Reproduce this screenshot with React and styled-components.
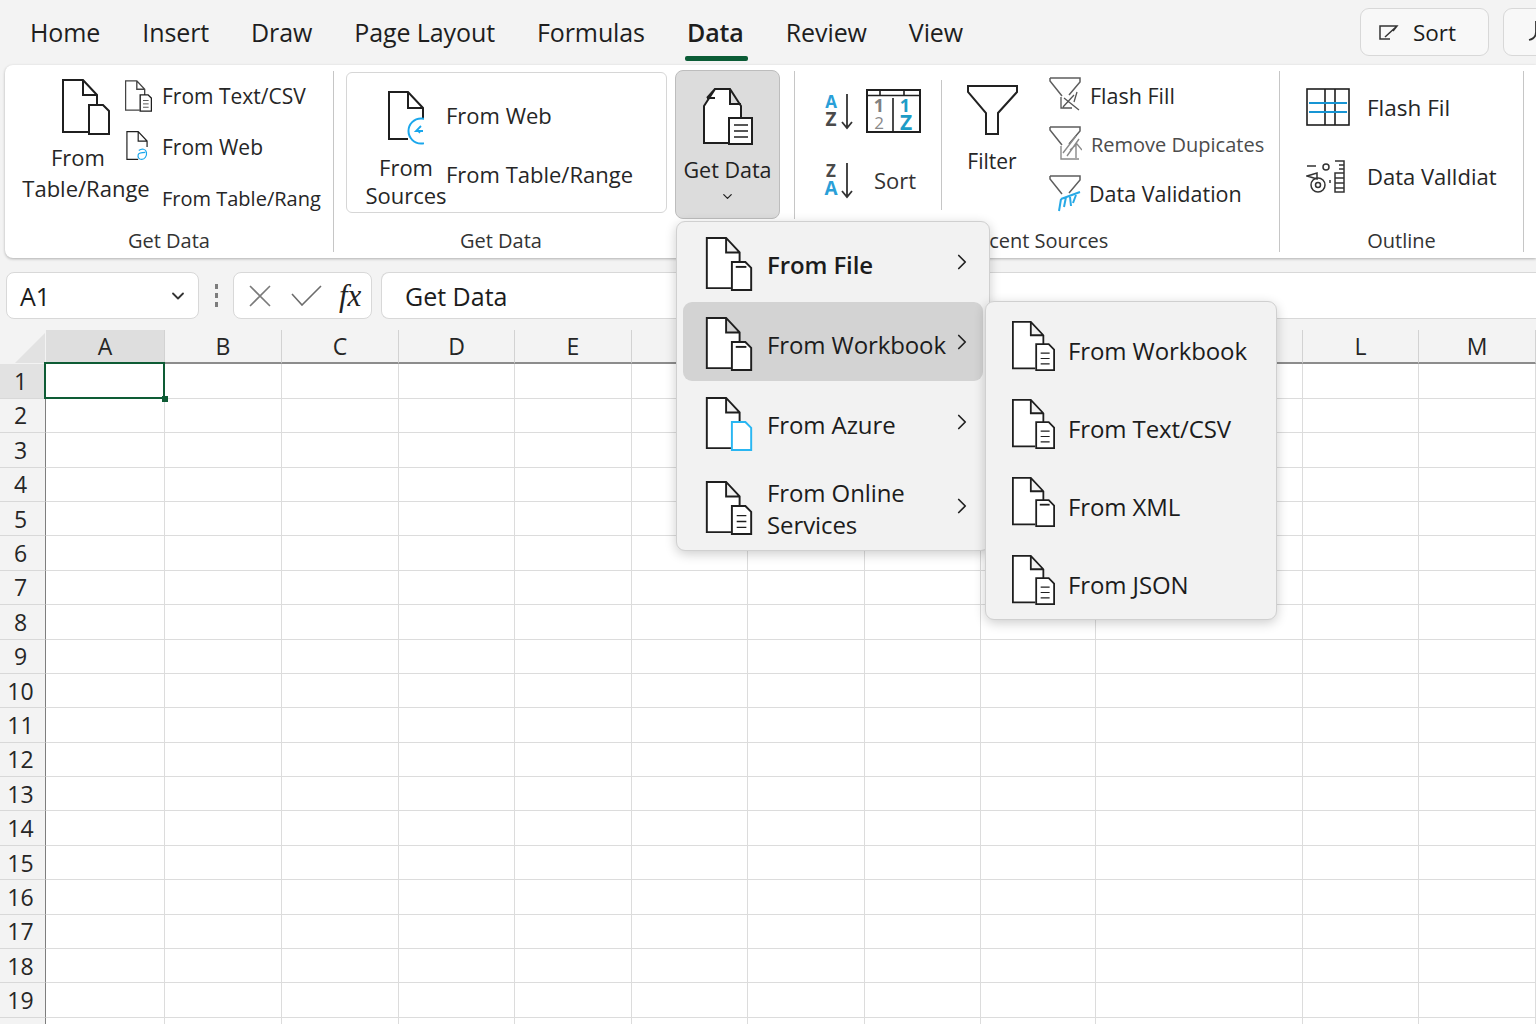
import React from 'react';
import styled, { createGlobalStyle } from 'styled-components';
import { ChevronDown, ChevronRight } from 'lucide-react';

const GlobalStyle = createGlobalStyle`
  html, body {
    margin: 0;
    padding: 0;
    background: #f3f3f3;
  }
  body {
    font-family: "Open Sans", "Noto Sans", "Liberation Sans", sans-serif;
    color: #1c1c1c;
  }
`;

const Page = styled.div`
  position: relative;
  width: 1536px;
  height: 1024px;
  overflow: hidden;
  background: #f3f3f3;
`;

/* tab strip */
const TabBar = styled.div`
  display: flex;
  height: 65px;
  padding-left: 30px;
  gap: 42px;
`;

const Tab = styled.div`
  position: relative;
  display: flex;
  align-items: center;
  font-size: 25px;
  letter-spacing: -0.1px;
  font-weight: ${p => (p.$active ? 600 : 400)};
  color: #1e1e1e;
  padding-bottom: 2px;
  &::after {
    content: '';
    display: ${p => (p.$active ? 'block' : 'none')};
    position: absolute;
    left: -2px;
    right: -4px;
    bottom: 4px;
    height: 5px;
    border-radius: 2px;
    background: #0b5c36;
  }
`;

const Actions = styled.div`
  display: flex;
  flex: none;
  width: 176px;
  margin-left: auto;
  margin-top: 8px;
  height: 48px;
  gap: 14px;
  overflow: hidden;
`;

const ActionButton = styled.button`
  flex: none;
  display: flex;
  align-items: center;
  gap: 14px;
  width: ${p => p.$w}px;
  height: 48px;
  padding: 0 0 0 ${p => p.$pad}px;
  box-sizing: border-box;
  border: 1px solid #d8d8d8;
  border-radius: 9px;
  background: #f8f8f8;
  font: 400 22.5px "Open Sans", sans-serif;
  color: #1c1c1c;
`;

/* ribbon */
const Ribbon = styled.div`
  display: flex;
  height: 193px;
  margin-left: 5px;
  background: #fff;
  border-radius: 8px 0 0 8px;
  box-shadow: 0 1px 3px rgba(0, 0, 0, 0.28);
`;

const Group = styled.section`
  flex: none;
  display: flex;
  flex-direction: column;
  width: ${p => p.$w}px;
  height: 100%;
`;

const GroupBody = styled.div`
  flex: 1;
  display: flex;
  min-height: 0;
`;

const GroupLabel = styled.div`
  height: 34px;
  line-height: 34px;
  text-align: center;
  font-size: 20px;
  color: #333;
`;

const Separator = styled.div`
  flex: none;
  width: 1px;
  margin-top: ${p => p.$top || 6}px;
  height: ${p => p.$h || 181}px;
  background: #c6c6c6;
`;

const LargeButton = styled.div`
  flex: none;
  display: flex;
  flex-direction: column;
  align-items: center;
  width: ${p => p.$w}px;
  margin-left: ${p => p.$left}px;
  padding-top: ${p => p.$top}px;
`;

const LargeText = styled.div`
  margin-top: ${p => p.$gap}px;
  font-size: ${p => p.$size}px;
  line-height: ${p => p.$lh}px;
  text-align: center;
  white-space: nowrap;
  color: #262626;
`;

const ShiftedLine = styled.span`
  display: block;
  margin-right: ${p => p.$shift}px;
`;

const SmallList = styled.div`
  display: flex;
  flex-direction: column;
  margin-left: ${p => p.$left}px;
  padding-top: ${p => p.$top}px;
`;

const SmallRow = styled.div`
  display: flex;
  align-items: center;
  height: ${p => p.$h}px;
  white-space: nowrap;
  font-size: ${p => p.$size || 21}px;
  color: ${p => p.$color || '#262626'};
  font-weight: ${p => p.$weight || 400};
`;

const IconSlot = styled.div`
  flex: none;
  display: flex;
  align-items: center;
  width: ${p => p.$w}px;
`;

const BorderedBox = styled.div`
  flex: none;
  display: flex;
  box-sizing: border-box;
  width: 321px;
  height: 141px;
  margin: 7px 0 0 12px;
  border: 1px solid #d6d6d6;
  border-radius: 6px;
`;

const GetDataWrap = styled.div`
  flex: none;
  width: 126px;
  padding: 5px 0 0 7px;
  box-sizing: border-box;
`;

const GetDataButton = styled.div`
  display: flex;
  flex-direction: column;
  align-items: center;
  box-sizing: border-box;
  width: 105px;
  height: 149px;
  padding-top: 17px;
  background: #dcdcdc;
  border: 1px solid #bdbdbd;
  border-radius: 8px;
`;

const GetDataText = styled.div`
  margin-top: 9px;
  margin-bottom: 3px;
  font-size: 21.5px;
  line-height: 32px;
  color: #222;
`;

const SortColumn = styled.div`
  flex: none;
  width: 146px;
  box-sizing: border-box;
  padding: 24px 0 0 29px;
  display: flex;
  flex-direction: column;
  gap: 25px;
`;

const SortRow = styled.div`
  display: flex;
  align-items: center;
  height: 44px;
  gap: ${p => p.$gap}px;
  font-size: 22px;
  color: #333;
`;

/* formula bar */
const FormulaRow = styled.div`
  display: flex;
  align-items: stretch;
  height: 47px;
  margin-top: 14px;
  padding-left: 6px;
`;

const FieldBox = styled.div`
  flex: ${p => (p.$grow ? 1 : 'none')};
  display: flex;
  align-items: center;
  box-sizing: border-box;
  width: ${p => (p.$w ? p.$w + 'px' : 'auto')};
  padding: 0 ${p => p.$right || 0}px 0 ${p => p.$left || 0}px;
  background: #fff;
  border: 1px solid #d8d8d8;
  border-right-width: ${p => (p.$grow ? 0 : 1)}px;
  border-radius: ${p => (p.$grow ? '8px 0 0 8px' : '8px')};
  font-size: 25px;
  color: #1c1c1c;
`;

const NameText = styled.span`
  flex: 1;
  font-weight: 500;
`;

const GripDots = styled.div`
  flex: none;
  display: flex;
  flex-direction: column;
  justify-content: center;
  align-items: center;
  gap: 4px;
  width: 34px;
  & > i {
    display: block;
    width: 3px;
    height: 5px;
    background: #7c7c7c;
  }
`;

const FxText = styled.span`
  font-family: "Liberation Serif", serif;
  font-style: italic;
  font-size: 31px;
  margin-left: 17px;
  color: #222;
`;

/* sheet */
const Sheet = styled.div`
  margin-top: 11px;
  display: grid;
  grid-template-columns: ${p => p.$template};
  grid-auto-rows: 34.4px;
`;

const HeaderCorner = styled.div`
  height: 34px;
  position: relative;
  &::after {
    content: '';
    position: absolute;
    right: 1px;
    bottom: 1px;
    border-style: solid;
    border-width: 0 0 30px 30px;
    border-color: transparent transparent #e2e2e2 transparent;
  }
`;

const ColHeader = styled.div`
  height: 34px;
  display: flex;
  align-items: center;
  justify-content: center;
  box-sizing: border-box;
  font-size: 23px;
  color: #262626;
  background: ${p => (p.$selected ? '#dedede' : 'transparent')};
  border-right: 1px solid #d2d2d2;
  border-bottom: 2px solid #8c8c8c;
`;

const RowHeader = styled.div`
  display: flex;
  align-items: center;
  justify-content: center;
  box-sizing: border-box;
  padding-right: 4px;
  font-size: 23px;
  color: #262626;
  background: ${p => (p.$selected ? '#e2e2e2' : '#f3f3f3')};
  border-right: 1.5px solid #7e7e7e;
  border-bottom: 1px solid #d8d8d8;
`;

const Cell = styled.div`
  position: relative;
  box-sizing: border-box;
  background: #fff;
  border-right: 1px solid #dcdcdc;
  border-bottom: 1px solid #dcdcdc;
  ${p =>
    p.$selected &&
    `
    &::before {
      content: '';
      position: absolute;
      inset: -2px -1px -1px -2px;
      border: 2.5px solid #0e5c35;
      z-index: 1;
    }
    &::after {
      content: '';
      position: absolute;
      right: -4px;
      bottom: -4px;
      width: 6px;
      height: 6px;
      background: #0e5c35;
      z-index: 2;
    }
  `}
`;

/* flyout menus */
const Menu = styled.div`
  position: absolute;
  left: ${p => p.$x}px;
  top: ${p => p.$y}px;
  width: ${p => p.$w}px;
  height: ${p => p.$h}px;
  box-sizing: border-box;
  padding: ${p => p.$pad};
  background: #f2f2f2;
  border: 1px solid #d0d0d0;
  border-radius: 9px;
  box-shadow: 0 3px 12px rgba(0, 0, 0, 0.2);
  z-index: ${p => p.$z};
`;

const MenuItem = styled.div`
  display: flex;
  align-items: center;
  height: ${p => p.$h}px;
  box-sizing: border-box;
  padding: 0 16px 0 ${p => p.$left}px;
  border-radius: 9px;
  background: ${p => (p.$active ? '#d3d3d3' : 'transparent')};
`;

const MenuIcon = styled.div`
  flex: none;
  display: flex;
  margin-top: ${p => p.$top || 0}px;
  margin-right: ${p => p.$gap}px;
`;

const MenuText = styled.div`
  flex: 1;
  padding-top: ${p => p.$top}px;
  font-size: 24px;
  line-height: 32px;
  letter-spacing: -0.1px;
  font-weight: ${p => (p.$strong ? 600 : 400)};
  color: #1c1c1c;
  white-space: nowrap;
`;

const ink = '#1f1f1f';

const subLines = {
  lines: <path d="M32 36h10M32 42h10M32 48h10" strokeWidth="1.3" />,
  tab: <path d="M31 31h11" strokeWidth="2" />,
  plain: null,
};

// page with a folded corner and a smaller page on top of it
const DocIcon = ({ w = 48, h = 56, sub = 'plain', subColor = ink, color = ink, weight = 2 }) => (
  <svg width={w} height={h} viewBox="0 0 48 56" fill="none" stroke={color} strokeWidth={weight}>
    <path d="M26 53H1V1H21L35 16V26M21 1V16H35" fill="#fff" />
    <path d="M27 55V26H41L47 32V55Z" fill="#fff" stroke={subColor} />
    <g stroke={subColor}>{subLines[sub]}</g>
  </svg>
);

const CircleDocIcon = ({ w, h, scribble }) => (
  <svg width={w} height={h} viewBox="0 0 36 54" fill="none" stroke={ink} strokeWidth="2">
    <path d="M20 48H1V1H20L35 17V27M20 1V17H35" />
    {scribble ? (
      <path d="M21 33c5-4 12-3 13 3 1 6-3 12-8 12-5 0-7-4-6-8 1-3 6-4 12-4" stroke="#1aa7ec" />
    ) : (
      <g stroke="#1aa7ec">
        <circle cx="33" cy="40" r="12.5" fill="#fff" />
        <path d="M33 35l-5 5h4l-1 2M28 40h7" strokeWidth="1.8" />
      </g>
    )}
  </svg>
);

const GetDataIcon = () => (
  <svg width="50" height="57" viewBox="0 0 50 57" fill="none" stroke={ink} strokeWidth="2">
    <path d="M26 55H1V18L12 1H27L38 18V30M4 10H12M27 1V16H38M12 1L4 10" fill="#fff" />
    <path d="M26 30H49V56H26Z" fill="#fff" />
    <path d="M31 37H45M31 43H45M31 49H45" strokeWidth="1.4" />
  </svg>
);

const LetterArrowIcon = ({ top, bottom, topColor, bottomColor }) => (
  <svg width="32" height="37" viewBox="0 0 32 37">
    <text x="7" y="15" fontSize="17" fontWeight="700" fontFamily="Open Sans" textAnchor="middle" fill={topColor}>{top}</text>
    <text x="7" y="33" fontSize="19" fontWeight="700" fontFamily="Open Sans" textAnchor="middle" fill={bottomColor}>{bottom}</text>
    <path d="M23 1V34M18 29L23 35L28 29" fill="none" stroke="#333" strokeWidth="1.8" />
  </svg>
);

const SortTableIcon = () => (
  <svg width="55" height="44" viewBox="0 0 55 44" fill="none">
    <rect x="1" y="1" width="53" height="42" stroke={ink} strokeWidth="2" />
    <path d="M1 6.5H54M14 1V6.5M38 1V6.5M27 9V43" stroke={ink} strokeWidth="1.6" />
    <g fontFamily="Open Sans" fontWeight="700" textAnchor="middle">
      <text x="13" y="23" fontSize="18" fill="#808080">1</text>
      <text x="13" y="40" fontSize="17" fontWeight="400" fill="#8a8a8a">2</text>
      <text x="39" y="23" fontSize="18" fill="#1d9cc6">1</text>
      <text x="40" y="41" fontSize="21" fill="#1d9cc6">Z</text>
    </g>
  </svg>
);

const FunnelIcon = () => (
  <svg width="51" height="50" viewBox="0 0 51 50" fill="#fff" stroke="#222" strokeWidth="2">
    <path d="M1 1H50V7L31 28V49H19V28L1 7Z" />
  </svg>
);

const funnelMarks = {
  flash: (
    <g stroke="#555" strokeWidth="1.3">
      <path d="M12 20V31H23M15 21L30 33M14 30L25 18M28 15L25 25" />
    </g>
  ),
  remove: (
    <g stroke="#8a8a8a" strokeWidth="1.4">
      <path d="M12 20V33H30M14 27L27 10M18 30L30 13M21 24L28 18L33 24M27 19V32" />
    </g>
  ),
  validate: (
    <g stroke="#28a9e6" strokeWidth="2">
      <path d="M12 24L10 36M17 22L15 32M21 22L22 31M12 24L31 17M27 20L24 28" />
    </g>
  ),
};

const SmallFunnelIcon = ({ mark }) => (
  <svg width="33" height="37" viewBox="0 0 33 37" fill="none" stroke="#5e5e5e" strokeWidth="1.5">
    <path d="M1 1H31V5L20 18M1 1V4L13 19" />
    {funnelMarks[mark]}
  </svg>
);

const BlueGridIcon = () => (
  <svg width="44" height="38" viewBox="0 0 44 38" fill="none" stroke={ink} strokeWidth="1.6">
    <rect x="1" y="1" width="42" height="36" />
    <path d="M19 1V37M29 1V37" />
    <path d="M3 15H41M3 24H41" stroke="#1795d4" strokeWidth="2" />
  </svg>
);

const OutlineToolsIcon = () => (
  <svg width="39" height="33" viewBox="0 0 39 33" fill="none" stroke="#333" strokeWidth="1.5">
    <path d="M1 6H10M1 16L11 13V19ZM24 20V23" />
    <circle cx="20" cy="7" r="3" />
    <circle cx="12" cy="25" r="7" />
    <circle cx="12" cy="25" r="2.5" />
    <path d="M29 13H38V32H29ZM29 1H38V13M33 5H38M33 9H38M29 18H38M29 23H38M29 28H38" />
  </svg>
);

const PencilBoxIcon = () => (
  <svg width="20" height="16" viewBox="0 0 20 16" fill="none" stroke="#333" strokeWidth="1.5">
    <path d="M11 15H1V2H18L14 7M6 13L18 2" />
  </svg>
);

const PersonIcon = () => (
  <svg width="14" height="24" viewBox="0 0 14 24" fill="none" stroke="#333" strokeWidth="1.8">
    <path d="M8 1V12C8 17 5 19 1 20" />
  </svg>
);

const CrossIcon = () => (
  <svg width="22" height="22" viewBox="0 0 22 22" stroke="#7a7a7a" strokeWidth="1.6">
    <path d="M1 1L21 21M21 1L1 21" />
  </svg>
);

const TickIcon = () => (
  <svg width="31" height="21" viewBox="0 0 31 21" fill="none" stroke="#6c6c6c" strokeWidth="1.6">
    <path d="M1 9L11 20L30 1" />
  </svg>
);

const COLUMNS = [
  ['A', 119], ['B', 117], ['C', 117], ['D', 116], ['E', 117], ['F', 116], ['G', 117],
  ['H', 116], ['I', 115], ['J', 207], ['L', 116], ['M', 117],
];
const ROWS = Array.from({ length: 20 }, (_, i) => i + 1);

const MAIN_MENU = [
  { label: 'From File', h: 80, strong: true, sub: 'tab' },
  { label: 'From Workbook', h: 79, active: true, sub: 'tab' },
  { label: 'From Azure', h: 81, sub: 'plain', subColor: '#29b6f2' },
  { label: 'From Online\nServices', h: 88, sub: 'lines' },
];

const SUB_MENU = [
  { label: 'From Workbook', sub: 'lines' },
  { label: 'From Text/CSV', sub: 'lines' },
  { label: 'From XML', sub: 'tab' },
  { label: 'From JSON', sub: 'lines' },
];

const App = () => {
  const template = `46px ${COLUMNS.map(c => c[1] + 'px').join(' ')}`;

  return (
    <Page>
      <GlobalStyle />
      <TabBar>
        {['Home', 'Insert', 'Draw', 'Page Layout', 'Formulas', 'Data', 'Review', 'View'].map(t => (
          <Tab key={t} $active={t === 'Data'}>{t}</Tab>
        ))}
        <Actions>
          <ActionButton $w={129} $pad={18}>
            <PencilBoxIcon />
            Sort
          </ActionButton>
          <ActionButton $w={60} $pad={24}>
            <PersonIcon />
          </ActionButton>
        </Actions>
      </TabBar>

      <Ribbon>
        <Group $w={328}>
          <GroupBody>
            <LargeButton $w={126} $left={18} $top={14}>
              <DocIcon />
              <LargeText $gap={7} $size={22} $lh={31}>
                <ShiftedLine $shift={16}>From</ShiftedLine>
                Table/Range
              </LargeText>
            </LargeButton>
            <SmallList $left={-24} $top={5}>
              <SmallRow $h={52}>
                <IconSlot $w={37}><DocIcon w={27} h={32} sub="lines" color="#444" weight={2.4} /></IconSlot>
                From Text/CSV
              </SmallRow>
              <SmallRow $h={52}>
                <IconSlot $w={37}><CircleDocIcon w={24} h={32} scribble /></IconSlot>
                From Web
              </SmallRow>
              <SmallRow $h={52} $size={20}>
                <IconSlot $w={37} />
                From Table/Rang
              </SmallRow>
            </SmallList>
          </GroupBody>
          <GroupLabel>Get Data</GroupLabel>
        </Group>
        <Separator />

        <Group $w={334}>
          <GroupBody>
            <BorderedBox>
              <LargeButton $w={80} $left={19} $top={18}>
                <CircleDocIcon w={36} h={54} />
                <LargeText $gap={8} $size={22} $lh={28}>From<br />Sources</LargeText>
              </LargeButton>
              <SmallList $left={0} $top={12}>
                <SmallRow $h={59} $size={22}>From Web</SmallRow>
                <SmallRow $h={59} $size={22}>From Table/Range</SmallRow>
              </SmallList>
            </BorderedBox>
          </GroupBody>
          <GroupLabel>Get Data</GroupLabel>
        </Group>

        <GetDataWrap>
          <GetDataButton>
            <GetDataIcon />
            <GetDataText>Get Data</GetDataText>
            <ChevronDown size={15} strokeWidth={2} color="#222" />
          </GetDataButton>
        </GetDataWrap>
        <Separator $h={148} />

        <Group $w={484}>
          <GroupBody>
            <SortColumn>
              <SortRow $gap={10}>
                <LetterArrowIcon top="A" bottom="Z" topColor="#2a9fd8" bottomColor="#4a4a4a" />
                <SortTableIcon />
              </SortRow>
              <SortRow $gap={18}>
                <LetterArrowIcon top="Z" bottom="A" topColor="#4a4a4a" bottomColor="#2a9fd8" />
                Sort
              </SortRow>
            </SortColumn>
            <Separator $top={15} $h={130} />
            <LargeButton $w={100} $left={0} $top={20}>
              <FunnelIcon />
              <LargeText $gap={10} $size={21} $lh={32}>Filter</LargeText>
            </LargeButton>
            <SmallList $left={7} $top={5}>
              <SmallRow $h={50} $size={21.5}>
                <IconSlot $w={41}><SmallFunnelIcon mark="flash" /></IconSlot>
                Flash Fill
              </SmallRow>
              <SmallRow $h={49} $size={20} $color="#4c4c4c">
                <IconSlot $w={42}><SmallFunnelIcon mark="remove" /></IconSlot>
                Remove Dupicates
              </SmallRow>
              <SmallRow $h={49} $size={21.5}>
                <IconSlot $w={40}><SmallFunnelIcon mark="validate" /></IconSlot>
                Data Validation
              </SmallRow>
            </SmallList>
          </GroupBody>
          <GroupLabel>Recent Sources</GroupLabel>
        </Group>
        <Separator />

        <Group $w={243}>
          <GroupBody>
            <SmallList $left={26} $top={15}>
              <SmallRow $h={54} $size={22.5} $weight={500}>
                <IconSlot $w={61}><BlueGridIcon /></IconSlot>
                Flash Fil
              </SmallRow>
              <SmallRow $h={84} $size={22}>
                <IconSlot $w={61}><OutlineToolsIcon /></IconSlot>
                Data Valldiat
              </SmallRow>
            </SmallList>
          </GroupBody>
          <GroupLabel>Outline</GroupLabel>
        </Group>
        <Separator />
      </Ribbon>

      <FormulaRow>
        <FieldBox $w={193} $left={13} $right={10}>
          <NameText>A1</NameText>
          <ChevronDown size={20} strokeWidth={2.2} color="#333" />
        </FieldBox>
        <GripDots><i /><i /><i /></GripDots>
        <FieldBox $w={139} $left={15}>
          <CrossIcon />
          <span style={{ width: 20 }} />
          <TickIcon />
          <FxText>fx</FxText>
        </FieldBox>
        <span style={{ width: 9 }} />
        <FieldBox $grow $left={23}>Get Data</FieldBox>
      </FormulaRow>

      <Sheet $template={template}>
        <HeaderCorner />
        {COLUMNS.map(([name], i) => (
          <ColHeader key={name} $selected={i === 0}>{name}</ColHeader>
        ))}
        {ROWS.map(row => (
          <React.Fragment key={row}>
            <RowHeader $selected={row === 1}>{row}</RowHeader>
            {COLUMNS.map(([name], i) => (
              <Cell key={name} $selected={row === 1 && i === 0} />
            ))}
          </React.Fragment>
        ))}
      </Sheet>

      <Menu $x={676} $y={221} $w={314} $h={330} $pad="0 6px" $z={5}>
        {MAIN_MENU.map(item => (
          <MenuItem key={item.label} $h={item.h} $left={22} $active={item.active}>
            <MenuIcon $gap={14} $top={4}>
              <DocIcon sub={item.sub} subColor={item.subColor} h={54} />
            </MenuIcon>
            <MenuText $top={6} $strong={item.strong}>
              {item.label.split('\n').map(line => (
                <div key={line}>{line}</div>
              ))}
            </MenuText>
            <ChevronRight size={26} strokeWidth={1.6} color="#222" style={{ marginRight: -8 }} />
          </MenuItem>
        ))}
      </Menu>

      <Menu $x={985} $y={301} $w={292} $h={319} $pad="9px 0 0" $z={6}>
        {SUB_MENU.map(item => (
          <MenuItem key={item.label} $h={78} $left={26}>
            <MenuIcon $gap={13} $top={-8}>
              <DocIcon w={43} h={52} sub={item.sub} />
            </MenuIcon>
            <MenuText $top={2}>{item.label}</MenuText>
          </MenuItem>
        ))}
      </Menu>
    </Page>
  );
};

export default App;
